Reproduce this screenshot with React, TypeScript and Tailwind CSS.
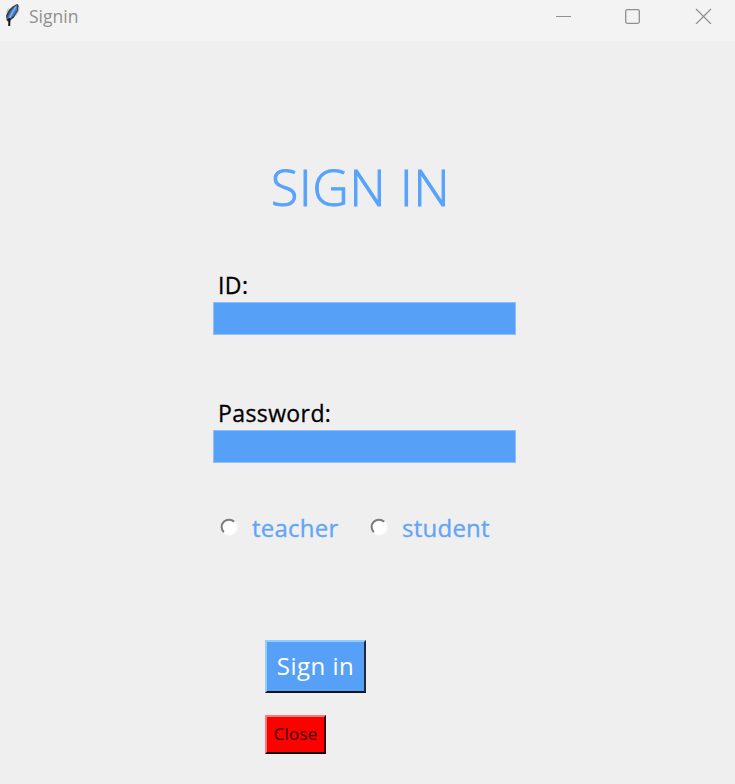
function Feather() {
  return (
    <svg className="mt-[3px] ml-[5px] h-6 w-[15px] shrink-0" viewBox="0 0 15 24" fill="none">
      <path d="M12.6 1C8.5 2 2.6 6.5 1 13l.8 4.5 1.7 1.5 5.5-4.500L13 8l.7-5z" fill="#3a3e44" />
      <path d="M12 2C7.500 5 3.200 10 2.200 15.500l1.700 1L9 12.500l3.200-5.500z" fill="#3c7bc9" />
      <path d="M11 3.5C8 8 6 11 4.5 16" stroke="#7fb2e8" strokeWidth="1.6" />
      <path d="M4.500 15l-.3 8" stroke="#15171a" strokeWidth="2" />
      <path d="M1.5 9.5l2-4M14 4l-.5 4-3 5" stroke="#b5ada3" strokeWidth="0.9" />
    </svg>
  );
}

function TitleBar() {
  return (
    <header className="flex h-[41px] items-start bg-[#f3f3f3] text-[#8f8f8f]">
      <Feather />
      <span className="ml-[9px] mt-[4px] text-[17.5px] leading-6">Signin</span>
      <svg className="ml-auto mr-[23px] mt-2 h-4 w-[156px]" viewBox="0 0 156 16" fill="none" stroke="#8f8f8f">
        <path d="M0 8.5h15" />
        <rect x="69.7" y="1.7" width="13.6" height="13.6" rx="1.5" strokeWidth="1.3" />
        <path d="M140 1l15 15M155 1l-15 15" strokeWidth="1.2" />
      </svg>
    </header>
  );
}

function Field({ label, className }: { label: string; className: string }) {
  return (
    <label className={`block ${className}`}>
      <span className="ml-[5px] block h-[34px] w-max text-[23px] leading-[34px] tracking-[0.4px] text-black [-webkit-text-stroke:0.3px_black]">
        {label}
      </span>
      <input className="block h-[33px] w-[303px] border border-[#8fbff5] bg-[#57a0f8] px-2 outline-none" />
    </label>
  );
}

function Radio({ label }: { label: string }) {
  return (
    <label className="flex w-[150px] items-center">
      <svg className="ml-[7px] h-[18px] w-[18px]" viewBox="0 0 18 18" fill="none">
        <circle cx="9" cy="9" r="7.5" fill="#fff" />
        <path d="M3.8 14.2A7.3 7.3 0 0 1 14.2 3.8" stroke="#7c7c7c" strokeWidth="2" />
        <path d="M14.8 3.8A7.7 7.7 0 0 1 3.8 14.8" stroke="#fafafa" strokeWidth="1.5" />
      </svg>
      <span className="ml-[14px] pt-0.5 text-[24px] leading-8 tracking-[0.25px] text-[#62a5f8] [-webkit-text-stroke:0.3px_#62a5f8]">
        {label}
      </span>
    </label>
  );
}

export default function App() {
  return (
    <div className="h-[784px] w-[735px] overflow-hidden bg-[#efefef] font-['Open_Sans','Noto_Sans',sans-serif]">
      <TitleBar />
      <main className="pl-[213px]">
        <h1 className="ml-[58px] pt-[111px] text-[50px] font-light leading-[70px] tracking-[0.8px] text-[#58a3fb] [-webkit-text-stroke:1px_#58a3fb]">
          SIGN IN
        </h1>
        <Field label="ID:" className="mt-[46px]" />
        <Field label="Password:" className="mt-[61px]" />
        <div className="mt-[48px] flex h-8 items-center">
          <Radio label="teacher" />
          <Radio label="student" />
        </div>
        <div className="ml-[52px] mt-[97px] flex flex-col items-start gap-[22px]">
          <button className="h-[53px] w-[101px] border-2 border-b-[#10151c] border-l-[#91ceff] border-r-[#202a38] border-t-[#91ceff] bg-[#57a0f8] pb-0.5 text-[24px] tracking-[0.5px] text-white">
            Sign in
          </button>
          <button className="h-[39px] w-[61px] border-2 border-b-[#180000] border-l-[#ff7777] border-r-[#330808] border-t-[#ff7777] bg-[#ff0000] pb-0.5 text-[17px] tracking-[0.2px] text-[#330000]">
            Close
          </button>
        </div>
      </main>
    </div>
  );
}
